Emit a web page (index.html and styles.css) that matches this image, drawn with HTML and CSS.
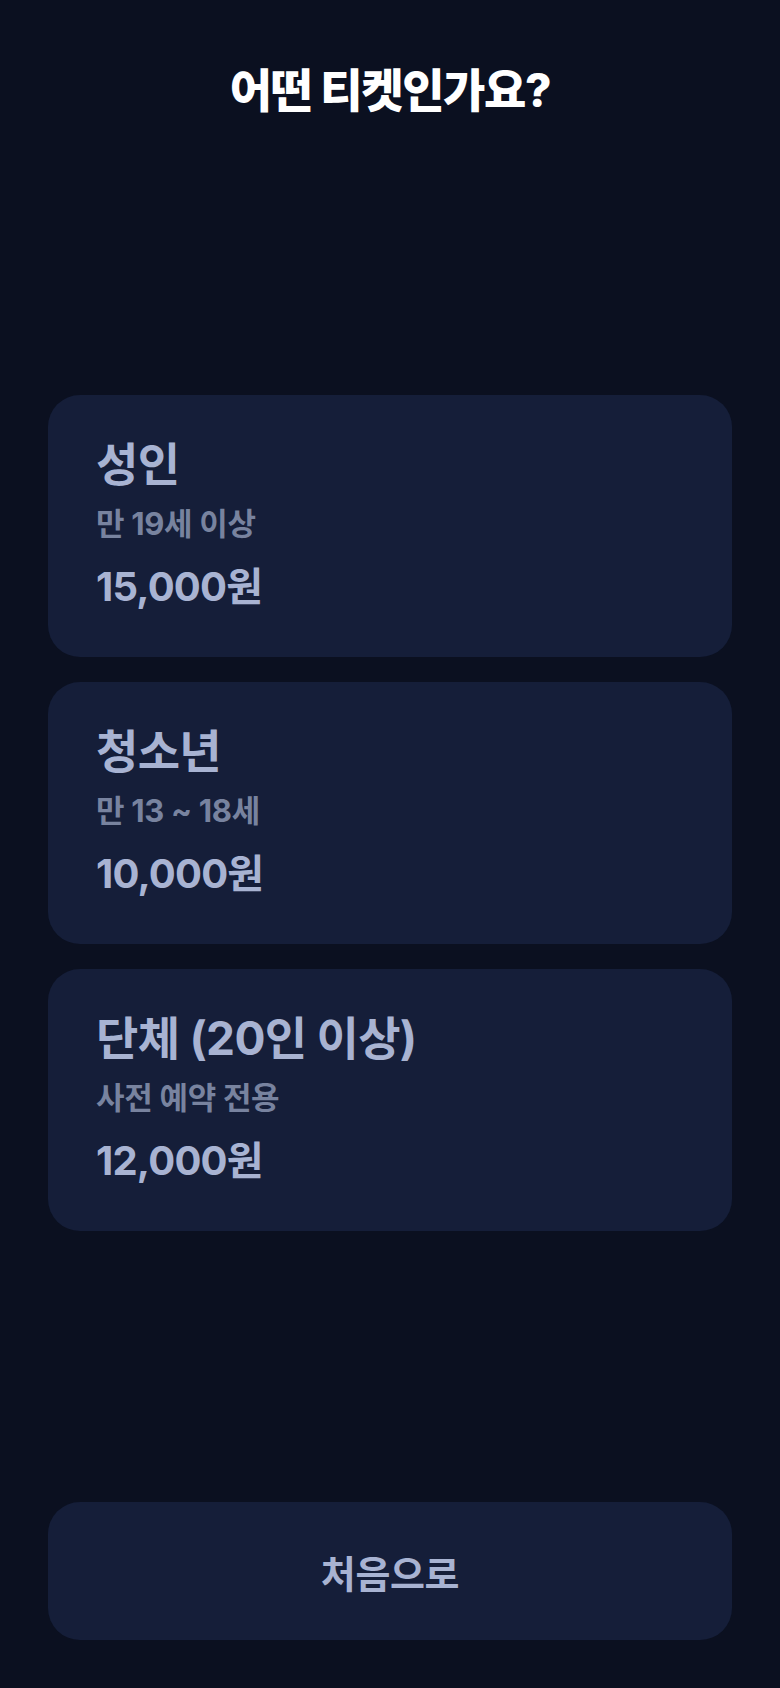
FILE: index.html
```html
<!DOCTYPE html>
<html lang="ko">
<head>
    <meta charset="UTF-8">
    <meta name="viewport" content="width=device-width, initial-scale=1.0">
    <title>티켓 선택</title>
    <link rel="stylesheet" href="styles.css">
</head>
<body>
    <div class="screen">
        <h1 class="page-title">어떤 티켓인가요?</h1>

        <div class="ticket-list">
            <div class="ticket-card">
                <div class="ticket-name">성인</div>
                <div class="ticket-desc">만 19세 이상</div>
                <div class="ticket-price">15,000원</div>
            </div>
            <div class="ticket-card">
                <div class="ticket-name">청소년</div>
                <div class="ticket-desc">만 13 ~ 18세</div>
                <div class="ticket-price">10,000원</div>
            </div>
            <div class="ticket-card">
                <div class="ticket-name">단체 (20인 이상)</div>
                <div class="ticket-desc">사전 예약 전용</div>
                <div class="ticket-price">12,000원</div>
            </div>
        </div>

        <button class="btn-home">처음으로</button>
    </div>
</body>
</html>
```

FILE: styles.css
```css
html, body {
    margin: 0;
    height: 100%;
}
body {
    background-color: #0b1020;
    font-family: Inter, "Noto Sans CJK KR", sans-serif;
}
.screen {
    display: flex;
    flex-direction: column;
    min-height: 100vh;
    padding: 62px 48px 48px;
    box-sizing: border-box;
}
.page-title {
    margin: 0 0 6px;
    color: #ffffff;
    text-align: center;
    font-size: 46px;
    line-height: 56px;
    font-weight: 800;
    letter-spacing: -0.03em;
}
.ticket-list {
    flex: 1;
    display: flex;
    flex-direction: column;
    justify-content: center;
    gap: 25px;
}
.ticket-card {
    background-color: #151e39;
    border-radius: 32px;
    padding: 44px 48px 47px;
}
.ticket-name {
    color: #a8b3d2;
    font-size: 46px;
    line-height: 50px;
    font-weight: 700;
    letter-spacing: -0.015em;
}
.ticket-desc {
    margin-top: 18px;
    color: #78839f;
    font-size: 31px;
    line-height: 34px;
    font-weight: 700;
    letter-spacing: -0.01em;
}
.ticket-price {
    margin-top: 23px;
    color: #a8b3d2;
    font-size: 40px;
    line-height: 46px;
    font-weight: 700;
    letter-spacing: -0.02em;
}
.btn-home {
    height: 138px;
    border: none;
    border-radius: 32px;
    background-color: #151e39;
    color: #a8b3d2;
    font-family: inherit;
    font-size: 38px;
    font-weight: 700;
    letter-spacing: -0.01em;
    cursor: pointer;
}
```
